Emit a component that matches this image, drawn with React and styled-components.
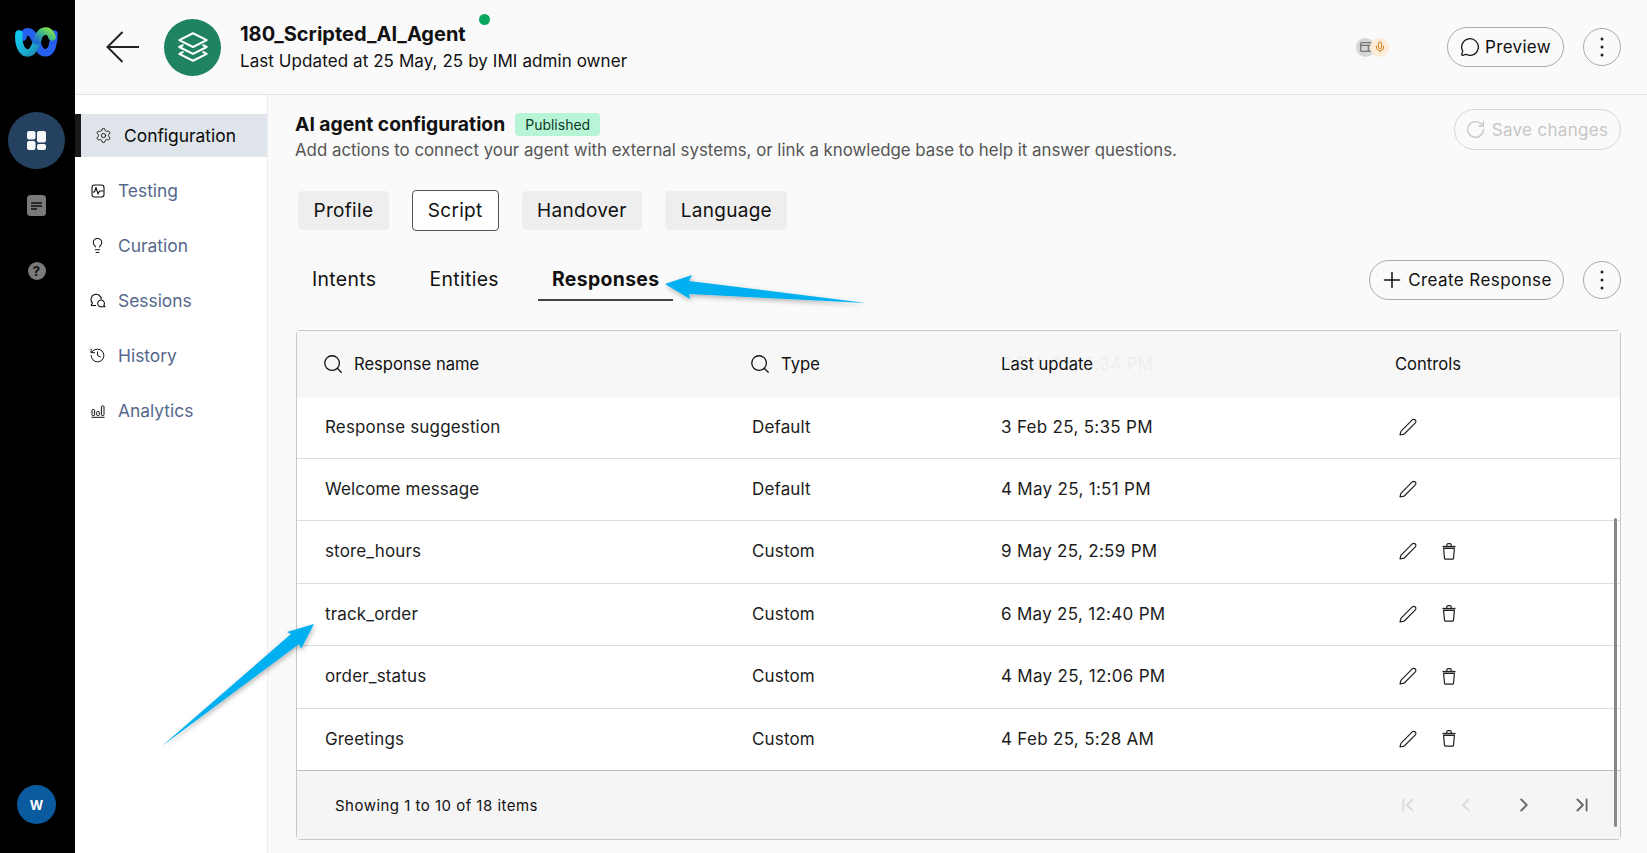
import React from 'react';
import styled, { createGlobalStyle } from 'styled-components';
import {
  ChevronFirst, ChevronLast, ChevronLeft, ChevronRight, History, Lightbulb, MessageCircle,
  Mic, Plus, RotateCw, Search, Settings,
} from 'lucide-react';

const GlobalStyle = createGlobalStyle`
  * { box-sizing: border-box; }
  html, body { margin: 0; padding: 0; height: 100%; }
  body {
    background: #fafafa;
    color: #111;
    font-family: Inter, "Liberation Sans", sans-serif;
    overflow: hidden;
  }
`;

const navItems = [
  { label: 'Configuration', icon: <Settings size={17} strokeWidth={1.3} />, active: true },
  { label: 'Testing', icon: <TestingIcon /> },
  { label: 'Curation', icon: <Lightbulb size={17} strokeWidth={1.5} /> },
  { label: 'Sessions', icon: <SessionsIcon /> },
  { label: 'History', icon: <History size={17} strokeWidth={1.4} /> },
  { label: 'Analytics', icon: <AnalyticsIcon /> },
];

const rows = [
  { name: 'Response suggestion', type: 'Default', date: '3 Feb 25, 5:35 PM', height: 61 },
  { name: 'Welcome message', type: 'Default', date: '4 May 25, 1:51 PM', height: 62 },
  { name: 'store_hours', type: 'Custom', date: '9 May 25, 2:59 PM', height: 63, removable: true },
  { name: 'track_order', type: 'Custom', date: '6 May 25, 12:40 PM', height: 62, removable: true },
  { name: 'order_status', type: 'Custom', date: '4 May 25, 12:06 PM', height: 63, removable: true },
  { name: 'Greetings', type: 'Custom', date: '4 Feb 25, 5:28 AM', height: 62, removable: true, last: true },
];

function TestingIcon() {
  return (
    <svg width="14" height="14" viewBox="0 0 14 14" fill="none" stroke="#111" strokeWidth="1.1">
      <rect x="1" y="1" width="12" height="12" rx="2.5" />
      <path d="M1.5 8 H3.5 L5 3.5 L7 10 L8.5 7 H12.5" strokeLinejoin="round" />
    </svg>
  );
}

function SessionsIcon() {
  return (
    <svg width="16" height="15" viewBox="0 0 16 15" fill="none" stroke="#111" strokeWidth="1.1">
      <path d="M1 12.5 L2.4 10 A5.2 5.2 0 1 1 11.4 6.5" strokeLinejoin="round" />
      <path d="M1 12.5 H6" />
      <path d="M15 13.8 L13.9 12.3 A3.4 3.4 0 1 0 11.6 13.8 Z" strokeLinejoin="round" />
    </svg>
  );
}

function AnalyticsIcon() {
  return (
    <svg width="14" height="14" viewBox="0 0 14 14" fill="none" stroke="#111" strokeWidth="1">
      <rect x="1" y="5.5" width="2.6" height="6" rx="0.8" />
      <rect x="5.7" y="7.5" width="2.6" height="4" rx="0.8" />
      <rect x="10.4" y="2" width="2.6" height="9.5" rx="0.8" />
      <path d="M0.5 13.3 H13.5" />
    </svg>
  );
}

function DotsIcon() {
  return (
    <svg width="4" height="20" viewBox="0 0 4 20" fill="#222">
      <circle cx="2" cy="2" r="1.5" />
      <circle cx="2" cy="10" r="1.5" />
      <circle cx="2" cy="18" r="1.5" />
    </svg>
  );
}

function WebexLogo() {
  return (
    <svg width="43" height="31" viewBox="0 0 43 31" fill="none" strokeLinecap="round">
      <defs>
        <linearGradient id="cyanBand" x1="0" y1="0" x2="1" y2="1">
          <stop offset="0" stopColor="#12c8ee" />
          <stop offset="0.7" stopColor="#1ba6c9" />
          <stop offset="1" stopColor="#1e7fb0" />
        </linearGradient>
        <linearGradient id="greenBand" x1="0" y1="1" x2="1" y2="0">
          <stop offset="0" stopColor="#1f6fd0" />
          <stop offset="0.55" stopColor="#3fb68a" />
          <stop offset="1" stopColor="#7de04e" />
        </linearGradient>
      </defs>
      <path d="M8 10 C9 3 16 3 19 10 L24 21 C27 28 35 27 37 20 C39 14 39 10 39 7" stroke="#2560ee" strokeWidth="7.5" />
      <path d="M4 7 C3 16 6 26 13 26 C18 26 20 20 23 12" stroke="url(#cyanBand)" strokeWidth="7.5" />
      <path d="M22 14 C24 6 28 4 31 4 C34 4 36 7 37 10" stroke="url(#greenBand)" strokeWidth="7.5" />
    </svg>
  );
}

function PencilIcon() {
  return (
    <svg width="18" height="18" viewBox="0 0 18 18" fill="none" stroke="#222" strokeWidth="1.2" strokeLinejoin="round">
      <path d="M1 17 L1.9 13.3 L13 2.2 C14 1.2 15.5 1.2 16.3 2 C17.1 2.8 17.1 4.2 16.1 5.2 L5 16.2 Z" />
    </svg>
  );
}

function TrashIcon() {
  return (
    <svg width="14" height="17" viewBox="0 0 14 17" fill="none" stroke="#222" strokeWidth="1.2" strokeLinejoin="round">
      <path d="M0.5 3.6 H13.5" strokeWidth="1.5" />
      <path d="M4.8 3.2 V2 C4.8 1.2 5.3 0.7 6 0.7 H8 C8.7 0.7 9.2 1.2 9.2 2 V3.2" />
      <path d="M1.6 5.4 H12.4 L11.5 15.2 C11.4 15.9 11 16.2 10.4 16.2 H3.6 C3 16.2 2.6 15.9 2.5 15.2 Z" />
    </svg>
  );
}

export default function App() {
  return (
    <Page>
      <GlobalStyle />
      <Rail>
        <LogoSlot><WebexLogo /></LogoSlot>
        <RailButton $active>
          <svg width="19" height="19" viewBox="0 0 19 19" fill="#f4f6f8">
            <rect x="0" y="0" width="8.5" height="8.5" rx="2" />
            <rect x="0" y="10" width="8.5" height="9" rx="2" />
            <rect x="10" y="0" width="9" height="11.5" rx="2" />
            <rect x="10" y="13" width="9" height="6" rx="2" />
          </svg>
        </RailButton>
        <RailButton>
          <svg width="19" height="21" viewBox="0 0 19 21">
            <rect width="19" height="21" rx="3.5" fill="#7a7a7a" />
            <path d="M4 8 H15 M4 11 H15 M4 14 H10" stroke="#111" strokeWidth="1.6" />
          </svg>
        </RailButton>
        <RailButton>
          <HelpDot>?</HelpDot>
        </RailButton>
        <Avatar>W</Avatar>
      </Rail>

      <Workspace>
        <TopBar>
          <BackButton>
            <svg width="34" height="32" viewBox="0 0 34 32" fill="none" stroke="#222" strokeWidth="2">
              <path d="M33 16 H2 M16.5 1 L1.5 16 L16.5 31" />
            </svg>
          </BackButton>
          <AgentBadge>
            <svg width="32" height="32" viewBox="0 0 28 28" fill="none" stroke="#fff" strokeWidth="1.8" strokeLinejoin="round" strokeLinecap="round">
              <path d="M14 2 L26 8 L14 14 L2 8 Z" />
              <path d="M5 12.5 L2 14 L14 20 L26 14 L23 12.5" />
              <path d="M5 18.5 L2 20 L14 26 L26 20 L23 18.5" />
            </svg>
          </AgentBadge>
          <AgentInfo>
            <AgentName>
              180_Scripted_AI_Agent
              <StatusDot />
            </AgentName>
            <AgentMeta>Last Updated at 25 May, 25 by IMI admin owner</AgentMeta>
          </AgentInfo>
          <Channels>
            <ChannelDot>
              <svg width="12" height="10" viewBox="0 0 12 10" fill="none" stroke="#777" strokeWidth="1.3">
                <rect x="0.7" y="0.7" width="10.6" height="8.6" rx="1" />
                <path d="M0.7 3.4 H11.3 M8.4 3.4 V9.3" />
              </svg>
            </ChannelDot>
            <ChannelDot $voice>
              <Mic size={12} color="#d18a35" strokeWidth={2.2} />
            </ChannelDot>
          </Channels>
          <OutlineButton>
            <MessageCircle size={20} strokeWidth={1.5} />
            Preview
          </OutlineButton>
          <CircleButton><DotsIcon /></CircleButton>
        </TopBar>

        <Body>
          <SideNav>
            {navItems.map((item) => (
              <NavItem key={item.label} $active={item.active}>
                <NavIcon>{item.icon}</NavIcon>
                {item.label}
              </NavItem>
            ))}
          </SideNav>

          <Main>
            <PageHead>
              <div>
                <TitleRow>
                  <PageTitle>AI agent configuration</PageTitle>
                  <Published>Published</Published>
                </TitleRow>
                <PageHint>Add actions to connect your agent with external systems, or link a knowledge base to help it answer questions.</PageHint>
              </div>
              <SaveButton>
                <RotateCw size={21} strokeWidth={1.5} />
                Save changes
              </SaveButton>
            </PageHead>

            <Pills>
              <Pill>Profile</Pill>
              <Pill $active>Script</Pill>
              <Pill>Handover</Pill>
              <Pill>Language</Pill>
            </Pills>

            <SubBar>
              <SubTab>Intents</SubTab>
              <SubTab>Entities</SubTab>
              <SubTab $active>Responses</SubTab>
              <CreateButton>
                <Plus size={26} strokeWidth={1.4} />
                Create Response
              </CreateButton>
              <CircleButton><DotsIcon /></CircleButton>
            </SubBar>

            <TableCard>
              <HeadRow>
                <HeadCell><HeadSearch size={22} strokeWidth={1.4} />Response name</HeadCell>
                <HeadCell><HeadSearch size={22} strokeWidth={1.4} />Type</HeadCell>
                <HeadCell>
                  <GhostDate>3 Feb 25, 5:34 PM</GhostDate>
                  <HeadLabel>Last update</HeadLabel>
                </HeadCell>
                <HeadCell>Controls</HeadCell>
              </HeadRow>
              {rows.map((row) => (
                <BodyRow key={row.name} $height={row.height} $last={row.last}>
                  <Cell>{row.name}</Cell>
                  <Cell>{row.type}</Cell>
                  <DateCell>{row.date}</DateCell>
                  <ControlsCell>
                    <PencilIcon />
                    {row.removable && <TrashIcon />}
                  </ControlsCell>
                </BodyRow>
              ))}
              <Footer>
                <ItemCount>Showing 1 to 10 of 18 items</ItemCount>
                <Pager>
                  <PagerButton $off><ChevronFirst size={22} strokeWidth={2} /></PagerButton>
                  <PagerButton $off><ChevronLeft size={22} strokeWidth={2} /></PagerButton>
                  <PagerButton><ChevronRight size={22} strokeWidth={2} /></PagerButton>
                  <PagerButton><ChevronLast size={22} strokeWidth={2} /></PagerButton>
                </Pager>
              </Footer>
              <ScrollThumb />
            </TableCard>
          </Main>
        </Body>
      </Workspace>

      <Callouts width="1647" height="853" viewBox="0 0 1647 853">
        <defs>
          <filter id="arrowShade" x="-20%" y="-40%" width="140%" height="180%">
            <feDropShadow dx="1" dy="2" stdDeviation="2.5" floodColor="#000" floodOpacity="0.3" />
          </filter>
        </defs>
        <polygon points="665,284 692,275 689,281 866,303 689,294 690,299" fill="#00b0f0" filter="url(#arrowShade)" />
        <polygon points="314,624 301,649 299,644 162,746 291,634 287,632" fill="#00b0f0" filter="url(#arrowShade)" />
      </Callouts>
    </Page>
  );
}

const Page = styled.div`
  display: flex;
  height: 853px;
  overflow: hidden;
  position: relative;
  width: 1647px;
`;

const Rail = styled.aside`
  align-items: center;
  background: #000;
  display: flex;
  flex: 0 0 75px;
  flex-direction: column;
  padding-right: 2px;
`;

const LogoSlot = styled.div`
  display: flex;
  height: 31px;
  margin-bottom: 54px;
  margin-top: 27px;
`;

const RailButton = styled.div`
  align-items: center;
  background: ${(p) => (p.$active ? '#24415f' : 'transparent')};
  border-radius: 50%;
  display: flex;
  height: 57px;
  justify-content: center;
  margin-bottom: 8px;
  width: 57px;
`;

const HelpDot = styled.span`
  align-items: center;
  background: #7a7a7a;
  border-radius: 50%;
  color: #111;
  display: flex;
  font-size: 13px;
  font-weight: 700;
  height: 18px;
  justify-content: center;
  width: 18px;
`;

const Avatar = styled.div`
  align-items: center;
  background: #0a5aa0;
  border-radius: 50%;
  color: #fff;
  display: flex;
  font-size: 13px;
  font-weight: 700;
  height: 39px;
  justify-content: center;
  margin-top: auto;
  margin-bottom: 29px;
  width: 39px;
`;

const Workspace = styled.div`
  display: flex;
  flex: 1;
  flex-direction: column;
  min-width: 0;
`;

const TopBar = styled.header`
  align-items: center;
  background: #fafafa;
  border-bottom: 1px solid #e4e4e4;
  display: flex;
  flex: 0 0 95px;
  padding: 0 26px 0 31px;
`;

const BackButton = styled.div`
  display: flex;
  margin-right: 24px;
`;

const AgentBadge = styled.div`
  align-items: center;
  background: #1f8360;
  border-radius: 50%;
  display: flex;
  height: 57px;
  justify-content: center;
  margin-right: 19px;
  width: 57px;
`;

const AgentInfo = styled.div`
  display: flex;
  flex-direction: column;
  gap: 5px;
  padding-top: 1px;
`;

const AgentName = styled.div`
  font-size: 20px;
  font-weight: 700;
  line-height: 22px;
  position: relative;
  width: max-content;
`;

const StatusDot = styled.span`
  background: #0aa85f;
  border-radius: 50%;
  height: 11px;
  position: absolute;
  right: -24px;
  top: -9px;
  width: 11px;
`;

const AgentMeta = styled.div`
  font-size: 17px;
  letter-spacing: 0.08px;
  line-height: 22px;
`;

const Channels = styled.div`
  align-items: center;
  display: flex;
  margin-left: auto;
  margin-right: 58px;
`;

const ChannelDot = styled.span`
  align-items: center;
  background: ${(p) => (p.$voice ? '#fdedd8' : '#d6d6d6')};
  border-radius: 50%;
  display: flex;
  height: 19px;
  justify-content: center;
  margin-left: ${(p) => (p.$voice ? '-5px' : '0')};
  position: relative;
  width: 19px;
`;

const OutlineButton = styled.button`
  align-items: center;
  background: transparent;
  border: 1px solid #aaa;
  border-radius: 20px;
  color: #111;
  display: flex;
  font-family: inherit;
  font-size: 17px;
  gap: 5px;
  height: 40px;
  justify-content: center;
  letter-spacing: 0.3px;
  margin-right: 19px;
  padding: 0;
  width: 117px;
`;

const CircleButton = styled.button`
  align-items: center;
  background: transparent;
  border: 1px solid #aaa;
  border-radius: 50%;
  color: #222;
  display: flex;
  flex: 0 0 38px;
  height: 38px;
  justify-content: center;
  padding: 0;
  width: 38px;
`;

const Body = styled.div`
  display: flex;
  flex: 1;
  min-height: 0;
`;

const SideNav = styled.nav`
  background: #fff;
  border-right: 1px solid #ececec;
  display: flex;
  flex: 0 0 193px;
  flex-direction: column;
  gap: 12px;
  padding-top: 19px;
`;

const NavItem = styled.div`
  align-items: center;
  background: ${(p) => (p.$active ? '#dfe5ea' : 'transparent')};
  border-left: ${(p) => (p.$active ? '6px solid #1a1a1a' : 'none')};
  color: ${(p) => (p.$active ? '#0a0a0a' : '#56688c')};
  display: flex;
  font-size: 17.4px;
  gap: 12px;
  height: 43px;
  padding-left: 14px;
`;

const NavIcon = styled.span`
  align-items: center;
  color: #111;
  display: flex;
  justify-content: center;
  width: 17px;
`;

const Main = styled.main`
  display: flex;
  flex: 1;
  flex-direction: column;
  min-width: 0;
  padding: 14px 26px 13px 27px;
`;

const PageHead = styled.div`
  align-items: flex-start;
  display: flex;
  justify-content: space-between;
`;

const TitleRow = styled.div`
  align-items: center;
  display: flex;
  gap: 10px;
  margin-top: 4px;
`;

const PageTitle = styled.h1`
  font-size: 19.3px;
  font-weight: 700;
  line-height: 23px;
  margin: 0;
`;

const Published = styled.span`
  background: #b8f5d6;
  border-radius: 4px;
  color: #0c3a26;
  font-size: 14px;
  line-height: 23px;
  padding: 0 10px;
`;

const PageHint = styled.p`
  color: #555;
  font-size: 16.84px;
  line-height: 24px;
  margin: 2px 0 0;
`;

const SaveButton = styled.button`
  align-items: center;
  background: transparent;
  border: 1px solid #d6d6d6;
  border-radius: 21px;
  color: #c6c6c6;
  display: flex;
  font-family: inherit;
  font-size: 17px;
  gap: 6px;
  height: 41px;
  justify-content: center;
  letter-spacing: 0.3px;
  padding: 0 2px 0 0;
  width: 167px;
`;

const Pills = styled.div`
  align-items: center;
  display: flex;
  gap: 23px;
  margin-left: 3px;
  margin-top: 28px;
`;

const Pill = styled.button`
  background: ${(p) => (p.$active ? '#fff' : '#eeeeee')};
  border: 1px solid ${(p) => (p.$active ? '#555' : '#eeeeee')};
  border-radius: 4px;
  color: #111;
  font-family: inherit;
  font-size: 19px;
  height: ${(p) => (p.$active ? '41px' : '39px')};
  letter-spacing: 0.3px;
  padding: ${(p) => (p.$active ? '0 15px' : '0 14.5px')};
`;

const SubBar = styled.div`
  align-items: center;
  display: flex;
  gap: 25px;
  height: 40px;
  margin-left: 3px;
  margin-top: 29px;
`;

const SubTab = styled.div`
  border-bottom: 2px solid ${(p) => (p.$active ? '#444' : 'transparent')};
  font-size: 19.4px;
  font-weight: ${(p) => (p.$active ? 700 : 400)};
  letter-spacing: 0.35px;
  line-height: 40px;
  padding: 0 14px;
`;

const CreateButton = styled(OutlineButton)`
  gap: 3px;
  letter-spacing: 0.42px;
  margin-left: auto;
  margin-right: -6px;
  padding-right: 2px;
  width: 195px;
`;

const TableCard = styled.section`
  background: #fff;
  border: 1px solid #c8c8c8;
  border-radius: 4px;
  display: flex;
  flex: 1;
  flex-direction: column;
  margin-left: 1px;
  margin-top: 30px;
  min-height: 0;
  position: relative;
`;

const columns = `
  display: grid;
  grid-template-columns: 427px 249px 394px 1fr;
  padding-left: 28px;
`;

const HeadRow = styled.div`
  ${columns}
  align-items: center;
  background: #f7f7f7;
  flex: 0 0 67px;
  padding-bottom: 2px;
`;

const HeadCell = styled.div`
  align-items: center;
  display: flex;
  font-size: 16.6px;
  gap: 10px;
  position: relative;
`;

const HeadSearch = styled(Search)`
  margin-left: -3px;
`;

const HeadLabel = styled.span`
  position: relative;
`;

const GhostDate = styled.span`
  color: #eeeeee;
  font-size: 17px;
  left: 0;
  letter-spacing: 0.3px;
  position: absolute;
  white-space: nowrap;
`;

const BodyRow = styled.div`
  ${columns}
  align-items: center;
  border-bottom: 1px solid ${(p) => (p.$last ? '#bdbdbd' : '#dedede')};
  flex: 0 0 ${(p) => p.$height}px;
  padding-bottom: 2px;
`;

const Cell = styled.div`
  color: #1c1c1c;
  font-size: 17px;
  letter-spacing: 0.15px;
`;

const DateCell = styled(Cell)`
  letter-spacing: 0.3px;
`;

const ControlsCell = styled.div`
  align-items: center;
  display: flex;
  gap: 25px;
  padding-left: 4px;
`;

const Footer = styled.div`
  align-items: center;
  background: #f5f5f5;
  display: flex;
  flex: 1;
  justify-content: space-between;
  padding: 0 27px 0 38px;
`;

const ItemCount = styled.span`
  font-size: 15px;
  letter-spacing: 0.48px;
`;

const Pager = styled.div`
  align-items: center;
  display: flex;
  gap: 36px;
`;

const PagerButton = styled.span`
  color: ${(p) => (p.$off ? '#dcdcdc' : '#666')};
  display: flex;
`;

const ScrollThumb = styled.div`
  background: #888;
  border-radius: 2px;
  height: 309px;
  position: absolute;
  right: 3px;
  top: 187px;
  width: 3px;
`;

const Callouts = styled.svg`
  left: 0;
  pointer-events: none;
  position: absolute;
  top: 0;
`;
